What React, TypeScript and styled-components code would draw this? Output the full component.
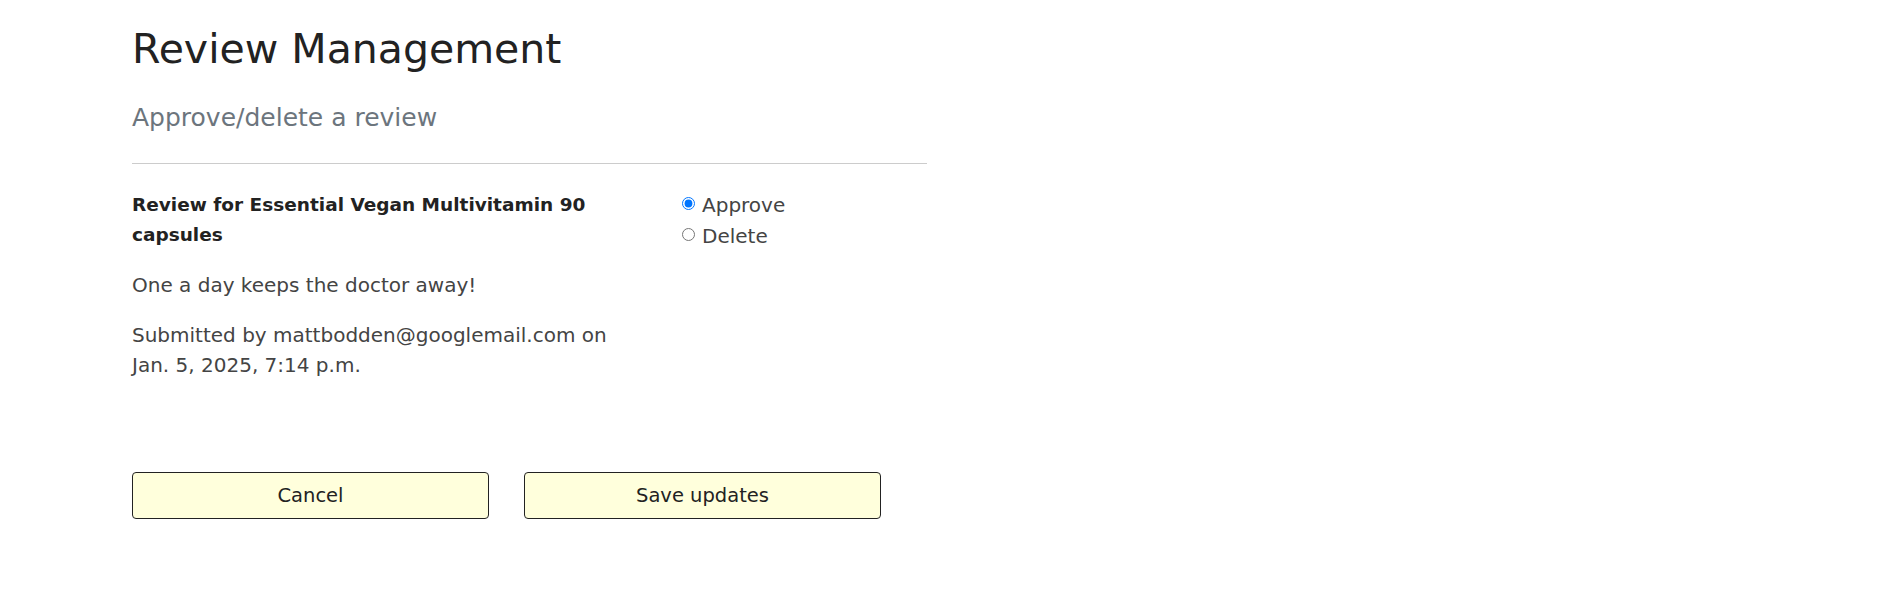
import React from "react";
import styled, { createGlobalStyle } from "styled-components";

const GlobalStyle = createGlobalStyle`
    body {
        margin: 0;
        background: #ffffff;
        font-family: "DejaVu Sans", "Noto Sans", sans-serif;
        color: #444444;
    }
`;

const Page = styled.main`
    width: 795px;
    padding: 25px 0 60px 132px;
`;

const Title = styled.h1`
    margin: 0;
    font-size: 41px;
    font-weight: 400;
    line-height: 48px;
    color: #222222;
`;

const Subtitle = styled.h4`
    margin: 30px 0 0;
    font-size: 25px;
    font-weight: 400;
    line-height: 30px;
    color: #6c757d;
`;

const Divider = styled.hr`
    margin: 30px 0 0;
    border: 0;
    border-top: 1px solid #cccccc;
`;

const ReviewRow = styled.section`
    display: grid;
    grid-template-columns: 500px 1fr;
    column-gap: 50px;
    margin-top: 26px;
`;

const ReviewInfo = styled.div`
    display: flex;
    flex-direction: column;
    gap: 20px;
    font-size: 20px;
    line-height: 30px;
`;

const ProductName = styled.h5`
    margin: 0;
    font-size: 18.5px;
    font-weight: 700;
    line-height: 30px;
    color: #222222;
`;

const Paragraph = styled.p`
    margin: 0;
`;

const Choices = styled.div`
    display: flex;
    flex-direction: column;
`;

const Choice = styled.label`
    display: flex;
    align-items: center;
    gap: 7px;
    font-size: 20px;
    line-height: 31px;
    color: #444444;

    input {
        margin: 0 0 4px;
        width: 13px;
        height: 13px;
    }
`;

const Actions = styled.div`
    display: flex;
    gap: 35px;
    margin-top: 92px;
`;

const Button = styled.button`
    width: 357px;
    height: 47px;
    background-color: #ffffdc;
    border: 1px solid #222222;
    border-radius: 4px;
    font-family: inherit;
    font-size: 19.5px;
    color: #222222;
    cursor: pointer;
`;

export default function App() {
    return (
        <>
            <GlobalStyle />
            <Page>
                <Title>Review Management</Title>
                <Subtitle>Approve/delete a review</Subtitle>
                <Divider />
                <ReviewRow>
                    <ReviewInfo>
                        <ProductName>Review for Essential Vegan Multivitamin 90 capsules</ProductName>
                        <Paragraph>One a day keeps the doctor away!</Paragraph>
                        <Paragraph>Submitted by mattbodden@googlemail.com on Jan. 5, 2025, 7:14 p.m.</Paragraph>
                    </ReviewInfo>
                    <Choices>
                        <Choice>
                            <input type="radio" name="review-1" defaultChecked />
                            Approve
                        </Choice>
                        <Choice>
                            <input type="radio" name="review-1" />
                            Delete
                        </Choice>
                    </Choices>
                </ReviewRow>
                <Actions>
                    <Button type="button">Cancel</Button>
                    <Button type="button">Save updates</Button>
                </Actions>
            </Page>
        </>
    );
}
